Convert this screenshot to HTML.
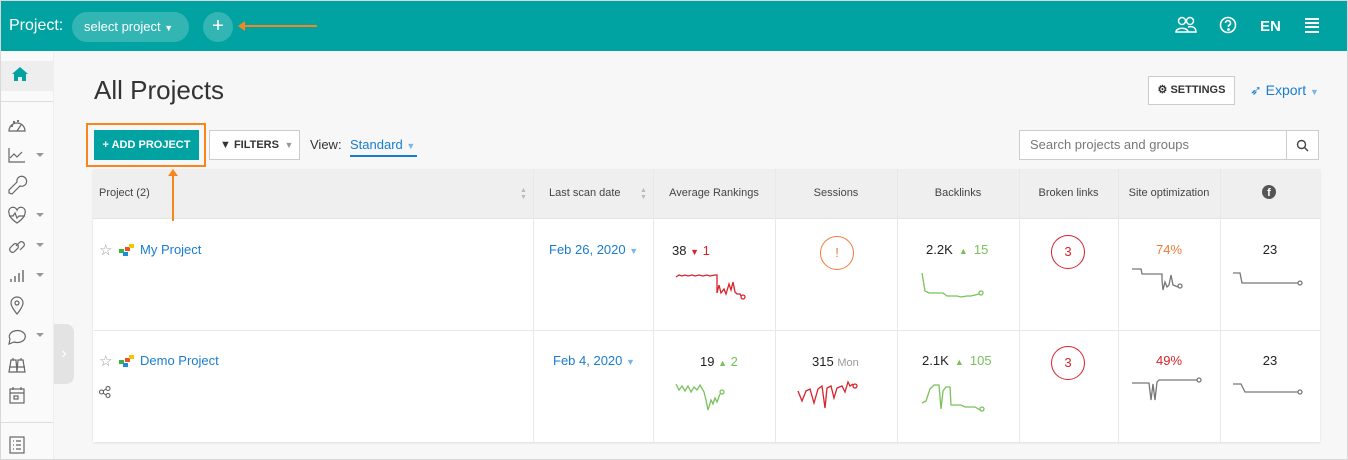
<!DOCTYPE html>
<html><head><meta charset="utf-8"><style>
*{box-sizing:border-box;margin:0;padding:0}
body{width:1348px;height:460px;overflow:hidden;font-family:"Liberation Sans",sans-serif;background:#f7f7f7;position:relative}
.top{position:absolute;left:0;top:0;width:1348px;height:51px;background:#00a3a1;color:#fff}
.abs{position:absolute}
.side{position:absolute;left:0;top:51px;width:54px;height:409px;background:#fafafa;border-right:1px solid #eee}
.tbl{position:absolute;left:93px;top:169px;width:1227px;height:273px;background:#fff;box-shadow:0 1px 2px #ddd}
.hdr{position:absolute;left:0;top:0;width:100%;height:50px;background:#efefef;border-bottom:1px solid #e3e3e3}
.vl{position:absolute;top:0;width:1px;height:273px;background:#e8e8e8}
.hl{position:absolute;left:0;width:100%;height:1px;background:#e8e8e8}
.h{position:absolute;top:18px;font-size:11px;color:#444;text-align:center}
.c{position:absolute;font-size:13px;color:#222;text-align:center}
.blue{color:#1a7ccf}
.circ{position:absolute;width:34px;height:34px;border-radius:50%;text-align:center;line-height:32px;font-size:13px}
svg.s{position:absolute;overflow:visible}
svg.i{position:absolute;left:7px;overflow:visible}
.ar{position:absolute;left:36px;width:0;height:0;border:4px solid transparent;border-top:4px solid #999;border-bottom:0}
</style></head><body>
<div class="top">
 <div class="abs" style="left:9px;top:17px;font-size:16px">Project:</div>
 <div class="abs" style="left:72px;top:12px;width:117px;height:30px;border-radius:15px;background:#33b5b4;font-size:13px;line-height:30px;padding-left:12px">select project <span style="font-size:9px">▼</span></div>
 <div class="abs" style="left:203px;top:12px;width:30px;height:30px;border-radius:50%;background:#33b5b4;text-align:center;line-height:29px;font-size:20px">+</div>
 <div class="abs" style="left:240px;top:25px;width:77px;height:2px;background:#f7861f"></div>
 <div class="abs" style="left:238px;top:21px;width:0;height:0;border:5px solid transparent;border-right:7px solid #f7861f;border-left:0"></div>
 <svg class="abs" style="left:1175px;top:16px" width="22" height="18" fill="none" stroke="#fff" stroke-width="1.5"><circle cx="7" cy="5" r="3.5"/><circle cx="15" cy="5" r="3.5"/><path d="M1 16c0-5 12-5 12 0zM13 11c4-1 8 0 8 5h-8"/></svg>
 <svg class="abs" style="left:1219px;top:16px" width="18" height="18" fill="none" stroke="#fff" stroke-width="1.6"><circle cx="9" cy="9" r="7.5"/><path d="M6.5 7a2.5 2.5 0 1 1 3 2.5v1.5"/><circle cx="9.5" cy="13.5" r=".6" fill="#fff"/></svg>
 <div class="abs" style="left:1260px;top:18px;font-size:15px;font-weight:bold">EN</div>
 <div class="abs" style="left:1305px;top:18px;width:14px;height:15px;border-top:2px solid #fff;border-bottom:2px solid #fff"><div style="margin-top:2px;height:2px;background:#fff"></div><div style="margin-top:2px;height:2px;background:#fff"></div></div>
</div>
<div class="side">
 <div class="abs" style="left:0;top:10px;width:53px;height:30px;background:#eee"></div>
 <svg class="abs" style="left:11px;top:15px" width="18" height="16"><path d="M9 1L1 8h2v7h4v-4h4v4h4V8h2z" fill="#00a3a1"/></svg>
 <div class="abs" style="left:0;top:50px;width:53px;height:1px;background:#ddd"></div>
 <div class="abs" style="left:0;top:371px;width:53px;height:1px;background:#ddd"></div>
</div>
<svg class="i" style="top:115px" width="20" height="20" fill="none" stroke="#666" stroke-width="1.2"><path d="M2 16a8 8 0 1 1 16 0zM10 16l4-6"/><circle cx="5" cy="11" r=".5"/><circle cx="7" cy="7" r=".5"/><circle cx="11" cy="6" r=".5"/></svg>
<svg class="i" style="top:145px" width="20" height="20" fill="none" stroke="#666" stroke-width="1.2"><path d="M2 3v14h16M3 13l4-4 3 3 5-5"/></svg>
<svg class="i" style="top:175px" width="20" height="20" fill="none" stroke="#666" stroke-width="1.2"><path d="M12 2a5 5 0 1 1 1 9l-8 8-3-1 0-3 8-8a5 5 0 0 1 2-5z"/></svg>
<svg class="i" style="top:205px" width="20" height="20" fill="none" stroke="#666" stroke-width="1.2"><path d="M2 8a4 4 0 0 1 8-3 4 4 0 0 1 8 3c0 5-8 10-8 10s-8-5-8-10zM2 11h4l2-3 2 5 2-2h6"/></svg>
<svg class="i" style="top:235px" width="20" height="20" fill="none" stroke="#666" stroke-width="1.2"><path d="M3 13l4-4a3 3 0 0 1 4 4l-4 4a3 3 0 0 1-4-4zM9 11l4-4a3 3 0 0 1 4 4l-4 4"/></svg>
<svg class="i" style="top:265px" width="20" height="20" fill="none" stroke="#666" stroke-width="1.4"><path d="M4 17v-3M8 17v-6M12 17v-9M16 17v-12"/></svg>
<svg class="i" style="top:295px" width="20" height="20" fill="none" stroke="#666" stroke-width="1.2"><path d="M10 19s-6-7-6-11a6 6 0 0 1 12 0c0 4-6 11-6 11z"/><circle cx="10" cy="8" r="2"/></svg>
<svg class="i" style="top:325px" width="20" height="20" fill="none" stroke="#666" stroke-width="1.2"><path d="M3 14a8 6 0 1 1 4 3l-5 2z"/></svg>
<svg class="i" style="top:355px" width="20" height="20" fill="none" stroke="#666" stroke-width="1.2"><path d="M2 17l2-12h5l1 12zM10 17l1-12h5l2 12zM2 12h16M6 5V3M14 5V3"/></svg>
<svg class="i" style="top:385px" width="20" height="20" fill="none" stroke="#666" stroke-width="1.2"><rect x="3" y="4" width="14" height="14"/><path d="M3 8h14M6 2v3M14 2v3"/><rect x="7" y="11" width="4" height="3"/></svg>
<svg class="i" style="top:435px" width="20" height="20" fill="none" stroke="#666" stroke-width="1.2"><rect x="3" y="2" width="14" height="16"/><path d="M6 6h1M9 6h5M6 10h1M9 10h5M6 14h1M9 14h5"/></svg>
<div class="ar" style="top:153px"></div><div class="ar" style="top:213px"></div><div class="ar" style="top:243px"></div><div class="ar" style="top:273px"></div><div class="ar" style="top:333px"></div>
<div class="abs" style="left:54px;top:324px;width:20px;height:60px;background:#e3e3e3;border-radius:0 8px 8px 0;color:#fff;text-align:center;line-height:60px">›</div>
<div class="abs" style="left:94px;top:75px;font-size:26px;color:#333">All Projects</div>
<div class="abs" style="left:1148px;top:76px;width:87px;height:29px;border:1px solid #ccc;background:#fff;font-size:11px;font-weight:bold;color:#333;line-height:27px;text-align:center">⚙ SETTINGS</div>
<div class="abs" style="left:1250px;top:82px;font-size:14px;color:#1a7ccf">➶ Export <span style="font-size:9px;color:#7ab6e8">▼</span></div>
<div class="abs" style="left:86px;top:123px;width:120px;height:44px;border:2px solid #f7861f"></div>
<div class="abs" style="left:94px;top:130px;width:105px;height:30px;background:#00a3a1;color:#fff;font-size:11px;font-weight:bold;text-align:center;line-height:30px">+ ADD PROJECT</div>
<div class="abs" style="left:209px;top:130px;width:91px;height:30px;border:1px solid #ccc;background:#fff;font-size:11px;font-weight:bold;color:#333;line-height:28px;padding-left:10px">▼ FILTERS <span style="color:#999;font-size:9px">&nbsp;▼</span></div>
<div class="abs" style="left:310px;top:137px;font-size:13px;color:#333">View:</div>
<div class="abs" style="left:350px;top:137px;font-size:13px;color:#1a7ccf;border-bottom:2px solid #1a7ccf;padding-bottom:3px;width:67px">Standard <span style="font-size:9px;color:#7ab6e8">▼</span></div>
<div class="abs" style="left:1019px;top:130px;width:300px;height:30px;border:1px solid #ccc;background:#fff;font-size:13px;color:#777;line-height:28px;padding-left:10px">Search projects and groups</div>
<div class="abs" style="left:1286px;top:130px;width:1px;height:30px;background:#ccc"></div>
<svg class="abs" style="left:1296px;top:139px" width="13" height="13" fill="none" stroke="#444" stroke-width="1.4"><circle cx="5.5" cy="5.5" r="4"/><path d="M8.5 8.5l3.5 3.5"/></svg>
<div class="tbl">
 <div class="hdr"></div>
 <div class="hl" style="top:161px"></div>
 <div class="vl" style="left:440px"></div><div class="vl" style="left:560px"></div><div class="vl" style="left:682px"></div><div class="vl" style="left:804px"></div><div class="vl" style="left:926px"></div><div class="vl" style="left:1025px"></div><div class="vl" style="left:1127px"></div>
 <div class="h" style="left:6px">Project (2)</div>
 <div class="abs" style="left:427px;top:18px;font-size:7px;color:#bbb;line-height:7px">▲<br>▼</div>
 <div class="h" style="left:456px">Last scan date</div>
 <div class="abs" style="left:547px;top:18px;font-size:7px;color:#bbb;line-height:7px">▲<br>▼</div>
 <div class="h" style="left:560px;width:122px">Average Rankings</div>
 <div class="h" style="left:682px;width:122px">Sessions</div>
 <div class="h" style="left:804px;width:122px">Backlinks</div>
 <div class="h" style="left:926px;width:99px">Broken links</div>
 <div class="h" style="left:1025px;width:102px">Site optimization</div>
 <div class="abs" style="left:1169px;top:16px;width:14px;height:14px;border-radius:50%;background:#555;color:#fff;font-size:11px;font-weight:bold;text-align:center;line-height:16px">f</div>
 <div class="c" style="left:6px;top:72px;color:#999;font-size:15px">☆</div>
 <svg class="abs" style="left:26px;top:75px" width="16" height="12"><rect x="0" y="5" width="5" height="4" fill="#3cb043"/><rect x="4" y="8" width="5" height="4" fill="#1a8fd6"/><rect x="6" y="3" width="5" height="4" fill="#e8502a"/><rect x="10" y="0" width="5" height="4" fill="#f5c400"/></svg>
 <div class="c blue" style="left:47px;top:73px">My Project</div>
 <div class="c blue" style="left:456px;top:73px">Feb 26, 2020 <span style="font-size:9px;color:#7ab6e8">▼</span></div>
 <div class="c" style="left:579px;top:74px">38 <span style="color:#d9222a;font-size:9px">▼</span> <span style="color:#d9222a">1</span></div>
 <svg class="s" style="left:583px;top:100px" width="75" height="35" fill="none" stroke="#d9222a" stroke-width="1.3"><path d="M0 8l3-2 3 1 3-1 3 1 4-1 3 1 4-1 4 1 4-1 3 1 5-1 2 0 0 18 2-8 2 8 3-4 2 5 3-10 2 6 2-8 2 10 2 2 3 0 1 2"/><circle cx="67" cy="28" r="2"/></svg>
 <div class="circ" style="left:727px;top:67px;border:1px solid #f07b3a;color:#f07b3a">!</div>
 <div class="c" style="left:833px;top:73px">2.2K <span style="color:#78c25a;font-size:9px">&nbsp;▲&nbsp;</span> <span style="color:#78c25a">15</span></div>
 <svg class="s" style="left:829px;top:104px" width="70" height="25" fill="none" stroke="#78c25a" stroke-width="1.3"><path d="M0 0l3 18 4 2 14 0 4 3 10 0 4 1 6-1 4 0 8-2"/><circle cx="59" cy="20" r="2"/></svg>
 <div class="circ" style="left:958px;top:66px;border:1px solid #d9222a;color:#d9222a">3</div>
 <div class="c" style="left:1025px;width:102px;top:73px;color:#f07b3a">74%</div>
 <svg class="s" style="left:1039px;top:98px" width="70" height="30" fill="none" stroke="#777" stroke-width="1.3"><path d="M0 2h9l1 5h20v6l1 10 2-8 2 5 2-2 2-10 2 10 5 2"/><circle cx="48" cy="19" r="2"/></svg>
 <div class="c" style="left:1127px;width:100px;top:73px">23</div>
 <svg class="s" style="left:1140px;top:102px" width="70" height="20" fill="none" stroke="#777" stroke-width="1.3"><path d="M0 2h7l2 10h56"/><circle cx="67" cy="12" r="2"/></svg>
 <div class="c" style="left:6px;top:183px;color:#999;font-size:15px">☆</div>
 <svg class="abs" style="left:26px;top:186px" width="16" height="12"><rect x="0" y="5" width="5" height="4" fill="#3cb043"/><rect x="4" y="8" width="5" height="4" fill="#1a8fd6"/><rect x="6" y="3" width="5" height="4" fill="#e8502a"/><rect x="10" y="0" width="5" height="4" fill="#f5c400"/></svg>
 <div class="c blue" style="left:47px;top:184px">Demo Project</div>
 <svg class="abs" style="left:6px;top:217px" width="12" height="12" fill="none" stroke="#555" stroke-width="1"><circle cx="2.5" cy="6" r="2"/><circle cx="9" cy="2.5" r="2"/><circle cx="9" cy="9.5" r="2"/><path d="M4 5l3-2M4 7l3 2"/></svg>
 <div class="c blue" style="left:460px;top:184px">Feb 4, 2020 <span style="font-size:9px;color:#7ab6e8">▼</span></div>
 <div class="c" style="left:607px;top:185px">19 <span style="color:#78c25a;font-size:9px">▲</span> <span style="color:#78c25a">2</span></div>
 <svg class="s" style="left:583px;top:215px" width="75" height="30" fill="none" stroke="#78c25a" stroke-width="1.3"><path d="M0 0l3 6 3-4 3 5 3-5 3 6 3-5 3 3 3-5 4 7 2 8 2 10 3-10 2 4 2-6 2 4 3-8"/><circle cx="46" cy="8" r="2"/></svg>
 <div class="c" style="left:719px;top:185px">315 <span style="color:#999;font-size:11px">Mon</span></div>
 <svg class="s" style="left:705px;top:214px" width="70" height="30" fill="none" stroke="#d9222a" stroke-width="1.3"><path d="M0 8l4 10 4-10 4-2 4 14 4-14 4-3 3 22 2-20 4-2 3 12 3-10 5-2 3 6 3-10 2 4 3-2"/><circle cx="57" cy="3" r="2"/></svg>
 <div class="c" style="left:829px;top:184px">2.1K <span style="color:#78c25a;font-size:9px">&nbsp;▲&nbsp;</span> <span style="color:#78c25a">105</span></div>
 <svg class="s" style="left:829px;top:214px" width="70" height="30" fill="none" stroke="#78c25a" stroke-width="1.3"><path d="M0 20l4-2 4-12 4-4 5 0 2 24 2-18 3-4 4 0 1 18 10 0 4 2 10 0 5 3"/><circle cx="60" cy="26" r="2"/></svg>
 <div class="circ" style="left:958px;top:177px;border:1px solid #d9222a;color:#d9222a">3</div>
 <div class="c" style="left:1025px;width:102px;top:184px;color:#d9222a">49%</div>
 <svg class="s" style="left:1039px;top:209px" width="70" height="30" fill="none" stroke="#777" stroke-width="1.3"><path d="M0 5h17l2 17 2-16 2 16 2-18 2-2h38"/><circle cx="67" cy="2" r="2"/></svg>
 <div class="c" style="left:1127px;width:100px;top:184px">23</div>
 <svg class="s" style="left:1140px;top:213px" width="70" height="20" fill="none" stroke="#777" stroke-width="1.3"><path d="M0 2h8l4 8h53"/><circle cx="67" cy="10" r="2"/></svg>
</div>
<div class="abs" style="left:172px;top:176px;width:2px;height:45px;background:#f7861f"></div>
<div class="abs" style="left:168px;top:169px;border:5px solid transparent;border-bottom:7px solid #f7861f;border-top:0"></div>
<div class="abs" style="left:0;top:0;width:1348px;height:460px;border:1px solid #d8d8d8;pointer-events:none"></div>
</body></html>
